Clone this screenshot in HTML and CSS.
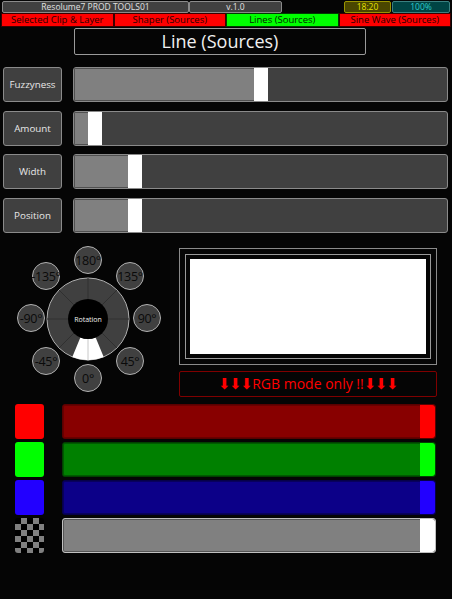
FILE: index.html
```html
<!DOCTYPE html>
<html lang="en">
<head>
    <meta charset="UTF-8">
    <meta name="viewport" content="width=device-width, initial-scale=1.0">
    <title>Lines (Sources)</title>
    <link rel="stylesheet" href="styles.css">
</head>
<body>
    <!-- Status Bar -->
    <div class="statusbar">
        <div class="cell app">Resolume7 PROD TOOLS01</div>
        <div class="cell version">v.1.0</div>
        <div class="spacer"></div>
        <div class="cell clock">18:20</div>
        <div class="cell battery">100%</div>
    </div>

    <!-- Tabs -->
    <div class="tabs">
        <div class="tab">Selected Clip &amp; Layer</div>
        <div class="tab">Shaper (Sources)</div>
        <div class="tab active">Lines (Sources)</div>
        <div class="tab">Sine Wave (Sources)</div>
    </div>

    <div class="title">Line (Sources)</div>

    <!-- Parameter Sliders -->
    <div class="sliders">
        <div class="slider-row">
            <div class="label">Fuzzyness</div>
            <div class="slider"><div class="fill" style="width: 180px"></div><div class="handle"></div></div>
        </div>
        <div class="slider-row">
            <div class="label">Amount</div>
            <div class="slider"><div class="fill" style="width: 14px"></div><div class="handle"></div></div>
        </div>
        <div class="slider-row">
            <div class="label">Width</div>
            <div class="slider"><div class="fill" style="width: 54px"></div><div class="handle"></div></div>
        </div>
        <div class="slider-row">
            <div class="label">Position</div>
            <div class="slider"><div class="fill" style="width: 54px"></div><div class="handle"></div></div>
        </div>
    </div>

    <!-- Rotation + Preview -->
    <div class="middle">
        <svg class="dial" width="178" height="154" viewBox="0 0 178 154">
            <circle cx="88" cy="75" r="41" fill="#404040" stroke="#b0b0b0" stroke-width="1"/>
            <g stroke="#303030" stroke-width="1">
                <line x1="88" y1="55" x2="88" y2="34"/>
                <line x1="102.1" y1="60.9" x2="117" y2="46"/>
                <line x1="108" y1="75" x2="129" y2="75"/>
                <line x1="102.1" y1="89.1" x2="117" y2="104"/>
                <line x1="73.9" y1="89.1" x2="59" y2="104"/>
                <line x1="68" y1="75" x2="47" y2="75"/>
                <line x1="73.9" y1="60.9" x2="59" y2="46"/>
            </g>
            <path d="M80.35,93.48 L72.31,112.88 A41,41 0 0 0 103.69,112.88 L95.65,93.48 A20,20 0 0 1 80.35,93.48 Z" fill="#fff"/>
            <line x1="88" y1="95" x2="88" y2="116" stroke="#c8c8c8" stroke-width="1"/>
            <circle cx="88" cy="75" r="20" fill="#000"/>
            <text x="88" y="78" class="dial-label">Rotation</text>

            <g class="preset">
                <circle cx="88" cy="16" r="13.5"/><text x="88" y="20.5">180°</text>
                <circle cx="130" cy="32" r="13.5"/><text x="130" y="36.5">135°</text>
                <circle cx="147" cy="74" r="13.5"/><text x="147" y="78.5">90°</text>
                <circle cx="130" cy="117" r="13.5"/><text x="130" y="121.5">45°</text>
                <circle cx="88" cy="134" r="13.5"/><text x="88" y="138.5">0°</text>
                <circle cx="46" cy="117" r="13.5"/><text x="46" y="121.5">-45°</text>
                <circle cx="31" cy="74" r="13.5"/><text x="31" y="78.5">-90°</text>
                <circle cx="46" cy="32" r="13.5"/><text x="46" y="36.5">-135°</text>
            </g>
        </svg>

        <div class="preview-col">
            <div class="preview">
                <div class="preview-inner">
                    <div class="preview-screen"></div>
                </div>
            </div>
            <div class="notice"><span class="arrows">⬇⬇⬇</span>RGB mode only !!<span class="arrows">⬇⬇⬇</span></div>
        </div>
    </div>

    <!-- Colour Channels -->
    <div class="channels">
        <div class="channel">
            <div class="swatch red"></div>
            <div class="bar red"><div class="bar-handle"></div></div>
        </div>
        <div class="channel">
            <div class="swatch green"></div>
            <div class="bar green"><div class="bar-handle"></div></div>
        </div>
        <div class="channel">
            <div class="swatch blue"></div>
            <div class="bar blue"><div class="bar-handle"></div></div>
        </div>
        <div class="channel">
            <div class="swatch alpha"></div>
            <div class="bar alpha"><div class="bar-handle"></div></div>
        </div>
    </div>
</body>
</html>
```

FILE: styles.css
```css
* {
    box-sizing: border-box;
}

body {
    font-family: "Open Sans", "DejaVu Sans", sans-serif;
    margin: 0;
    padding: 0;
    background-color: #050505;
    color: #fff;
    width: 452px;
    height: 599px;
    overflow: hidden;
}

/* Status Bar */
.statusbar {
    display: flex;
    height: 13px;
    padding: 1px 2px 0 2px;
}
.cell {
    height: 12px;
    font-size: 8.5px;
    line-height: 10px;
    text-align: center;
    border: 1px solid #8a8a8a;
    border-radius: 2px;
    background-color: #404040;
    color: #e0e0e0;
}
.cell.app {
    width: 187px;
}
.cell.version {
    width: 93px;
}
.spacer {
    flex: 1;
}
.cell.clock {
    width: 47px;
    background-color: #4a4600;
    border-color: #9a9400;
    color: #e6e000;
}
.cell.battery {
    width: 58px;
    margin-left: 1px;
    background-color: #004444;
    border-color: #3a8080;
    color: #2ccccc;
}

/* Tabs */
.tabs {
    display: flex;
    height: 14px;
    padding: 0 1px;
}
.tab {
    flex: 1;
    background-color: #ff0000;
    border: 1px solid #3a0000;
    color: #2a0000;
    font-size: 9.5px;
    line-height: 12px;
    text-align: center;
    white-space: nowrap;
}
.tab.active {
    background-color: #00ff00;
    border-color: #003a00;
    color: #002a00;
}

/* Title */
.title {
    margin: 1px 0 0 74px;
    width: 292px;
    height: 27px;
    border: 1px solid #9a9a9a;
    border-radius: 2px;
    font-size: 18px;
    line-height: 24px;
    text-align: center;
    color: #f0f0f0;
}

/* Sliders */
.sliders {
    display: flex;
    flex-direction: column;
    gap: 8.7px;
    margin-top: 12px;
    padding: 0 4px 0 3px;
}
.slider-row {
    display: flex;
    height: 35px;
    gap: 11px;
}
.label {
    width: 59px;
    background-color: #404040;
    border: 1px solid #8a8a8a;
    border-radius: 3px;
    font-size: 9.8px;
    line-height: 33px;
    text-align: center;
    color: #e8e8e8;
}
.slider {
    flex: 1;
    display: flex;
    background-color: #404040;
    border: 1px solid #8a8a8a;
    border-radius: 3px;
    overflow: hidden;
}
.slider .fill {
    background-color: #808080;
    border: 1px solid #505050;
    border-right: none;
}
.slider .handle {
    width: 14px;
    background-color: #fff;
}

/* Rotation and Preview */
.middle {
    display: flex;
    margin-top: 11px;
    height: 156px;
}
.dial {
    display: block;
    flex: none;
}
.dial-label {
    font-size: 7px;
    fill: #f0f0f0;
    text-anchor: middle;
}
.preset circle {
    fill: #404040;
    stroke: #b0b0b0;
    stroke-width: 1;
}
.preset text {
    font-size: 12.5px;
    fill: #0a0a0a;
    text-anchor: middle;
    letter-spacing: -0.3px;
}

.preview-col {
    display: flex;
    flex-direction: column;
    gap: 6px;
    margin: 4px 0 0 1px;
    width: 258px;
}
.preview {
    height: 117px;
    border: 1px solid #8a8a8a;
    padding: 5px;
}
.preview-inner {
    height: 100%;
    border: 1px solid #9a9a9a;
    padding: 4px;
}
.preview-screen {
    height: 100%;
    background-color: #fff;
}
.notice {
    height: 26px;
    border: 1px solid #800000;
    border-radius: 2px;
    font-size: 14px;
    line-height: 24px;
    text-align: center;
    color: #ff0000;
    white-space: nowrap;
}
.notice .arrows {
    font-family: "DejaVu Sans", sans-serif;
    font-size: 15px;
    letter-spacing: -1.5px;
    margin-right: 1px;
}

/* Colour Channels */
.channels {
    display: flex;
    flex-direction: column;
    gap: 3px;
    margin-top: 4px;
    padding-left: 15px;
}
.channel {
    display: flex;
    height: 35px;
    gap: 18px;
}
.swatch {
    width: 29px;
    border-radius: 3px;
}
.swatch.red { background-color: #ff0000; }
.swatch.green { background-color: #00ff00; }
.swatch.blue { background-color: #2200ff; }
.swatch.alpha {
    background-color: #000;
    background-image: conic-gradient(#808080 25%, #000 0 50%, #808080 0 75%, #000 0);
    background-size: 12px 12px;
    background-position: 0 0;
}

.bar {
    width: 374px;
    display: flex;
    justify-content: flex-end;
    border-radius: 3px;
    overflow: hidden;
}
.bar-handle {
    width: 15px;
    border-radius: 0 3px 3px 0;
}
.bar.red {
    background-color: #880000;
    border: 1px solid #5a0000;
    box-shadow: inset 0 0 0 1px #6a0000;
}
.bar.red .bar-handle { background-color: #ff0000; }
.bar.green {
    background-color: #008000;
    border: 1px solid #004000;
    box-shadow: inset 0 0 0 1px #005a00;
}
.bar.green .bar-handle { background-color: #00ff00; }
.bar.blue {
    background-color: #0c0088;
    border: 1px solid #06004a;
    box-shadow: inset 0 0 0 1px #08005e;
}
.bar.blue .bar-handle { background-color: #2200ff; }
.bar.alpha {
    background-color: #808080;
    border: 1px solid #c0c0c0;
    box-shadow: inset 0 0 0 1px #555;
}
.bar.alpha .bar-handle { background-color: #fff; }
```
